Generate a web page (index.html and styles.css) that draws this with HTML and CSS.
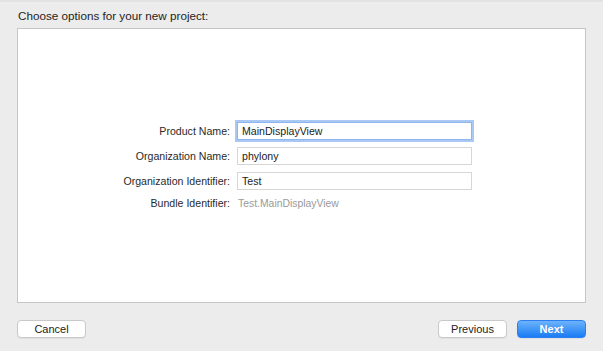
FILE: index.html
```html
<!DOCTYPE html>
<html lang="en">
<head>
    <meta charset="UTF-8">
    <meta name="viewport" content="width=device-width, initial-scale=1.0">
    <title>Choose options for your new project</title>
    <link rel="stylesheet" href="styles.css">
</head>
<body>

    <div class="sheet">
        <h1 class="sheet-title">Choose options for your new project:</h1>

        <!-- Options panel -->
        <div class="options-panel">
            <div class="options-form">
                <label class="field-label" for="product-name">Product Name:</label>
                <input type="text" id="product-name" class="field-input focused" value="MainDisplayView">

                <label class="field-label" for="org-name">Organization Name:</label>
                <input type="text" id="org-name" class="field-input" value="phylony">

                <label class="field-label" for="org-id">Organization Identifier:</label>
                <input type="text" id="org-id" class="field-input" value="Test">

                <span class="field-label">Bundle Identifier:</span>
                <span class="field-value">Test.MainDisplayView</span>
            </div>
        </div>

        <!-- Buttons -->
        <div class="sheet-footer">
            <button class="btn">Cancel</button>
            <div class="footer-right">
                <button class="btn">Previous</button>
                <button class="btn btn-primary">Next</button>
            </div>
        </div>
    </div>

</body>
</html>
```

FILE: styles.css
```css
body {
    margin: 0;
    font-family: "Liberation Sans", Arial, sans-serif;
    background-color: #ececec;
    color: #222;
}

.sheet {
    height: 351px;
    box-sizing: border-box;
    border-top: 2px solid #e2e2e2;
}

.sheet-title {
    margin: 0;
    padding: 7px 0 0 18px;
    height: 19px;
    font-size: 11.7px;
    font-weight: normal;
    color: #1e1e1e;
}

.options-panel {
    margin: 0 17px;
    height: 275px;
    box-sizing: border-box;
    background-color: #fff;
    border: 1px solid #c6c6c6;
    display: flex;
    align-items: center;
}

.options-form {
    display: grid;
    grid-template-columns: 212px 235px;
    column-gap: 7px;
    row-gap: 7px;
    align-items: center;
    margin-top: 0;
}

.field-label {
    text-align: right;
    font-size: 10.6px;
    color: #2a2a2a;
}

.field-input {
    height: 18px;
    box-sizing: border-box;
    margin: 0;
    padding: 0 4px;
    border: 1px solid #d6d6d6;
    font-family: "Liberation Sans", Arial, sans-serif;
    font-size: 10.6px;
    color: #222;
    outline: none;
}

.field-input.focused {
    border-color: #8fb5ee;
    box-shadow: 0 0 0 2px #a9c8f3;
}

.field-value {
    font-size: 10.4px;
    color: #9a9a9a;
    padding-left: 1px;
}

.sheet-footer {
    display: flex;
    justify-content: space-between;
    padding: 0 17px;
    margin-top: 17px;
}

.footer-right {
    display: flex;
    gap: 10px;
}

.btn {
    width: 69px;
    height: 18px;
    padding: 0;
    border: 1px solid #c9c9c9;
    border-radius: 4px;
    background-color: #fff;
    font-family: "Liberation Sans", Arial, sans-serif;
    font-size: 11px;
    color: #222;
    box-shadow: 0 1px 0 rgba(0, 0, 0, 0.05);
}

.btn-primary {
    border-color: #2b7ff2;
    background: linear-gradient(#6cb3fb, #1b7cf4);
    color: #fff;
    font-weight: bold;
}
```
